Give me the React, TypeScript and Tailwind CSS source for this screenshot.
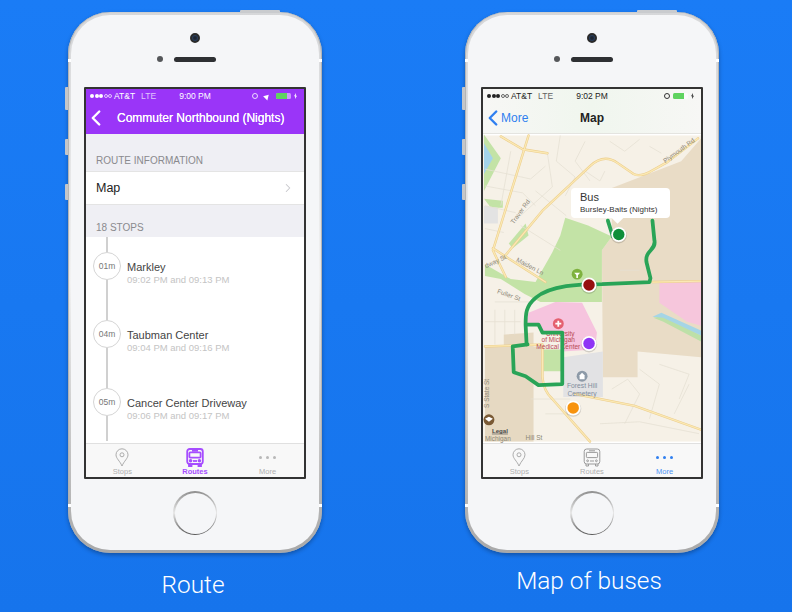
import React from 'react';
import { ChevronLeft, ChevronRight } from 'lucide-react';

const stops = [
  { mins: '01m', name: 'Markley', times: '09:02 PM and 09:13 PM' },
  { mins: '04m', name: 'Taubman Center', times: '09:04 PM and 09:16 PM' },
  { mins: '05m', name: 'Cancer Center Driveway', times: '09:06 PM and 09:17 PM' },
];

const streets = [
  'M547 152 L552 186 L520 215',
  'M560 134 L556 160 L575 176 L565 195',
  'M585 140 L575 160 L590 180',
  'M484 168 L530 178 L545 165',
  'M484 185 L522 192 L535 205',
  'M484 205 L515 212',
  'M484 228 L503 232',
  'M510 150 L500 205',
  'M520 225 L560 250',
  'M535 190 L566 215',
  'M494 302 L530 302',
  'M484 322 L520 322',
  'M494 310 L494 345',
  'M504 310 L504 335',
  'M514 310 L514 335',
  'M612 390 L628 380 L640 395 L625 425',
  'M640 370 L660 385 L650 420',
  'M660 365 L690 375 L680 400',
  'M690 385 L675 415',
  'M600 425 L640 423 L700 435',
  'M530 400 L570 400',
  'M545 415 L575 415',
  'M610 140 L625 150 L640 138',
  'M650 145 L662 152',
  'M585 170 L600 180 L605 170',
  'M620 270 L640 270',
];

const roads = [
  'M503 257 L542 210 L590 165 Q604 152 618 162 L634 173 Q640 176 650 171 L668 161 L699 137',
  'M528 134 L492 250 L505 277',
  'M500 135 L522 148 L547 152',
  'M492 248 L545 282',
  'M484 347 L542 345 L542 378 Q543 392 552 400 L590 443',
  'M575 395 L635 407 L702 431',
  'M653 282 L702 281',
];

const BusMap = () => {
  return (
    <svg viewBox="482 134 220 309" className="block w-full h-full">
      <rect x="482" y="134" width="220" height="309" fill="#f6f1e7" />
      <path d="M612 187 L682 160 L702 137 L702 358 L638 352 L638 378 L603 378 L602 250 L612 236 Z" fill="#e9dcc6" />
      <path d="M503 335 L533 333 L533 347 L542 347 L542 385 L533 385 L533 443 L484 443 L484 347 L503 347 Z" fill="#e6d9c2" />
      <path d="M660 283 L702 280 L702 326 L688 322 L660 303 Z" fill="#f6c6dc" />
      <path d="M654 318 L664 316 L702 336 L702 342 L664 322 Z" fill="#bde0a8" />
      <path d="M653 317 L662 313 L702 331 L702 336 L664 318 Z" fill="#a5d5e6" />
      <path d="M565 217 L588 225 L612 236 L602 250 L602 302 L540 302 L524 294 L500 279 L484 276 L484 264 L510 279 L535 282 L552 252 L560 235 Z" fill="#c3e3a6" />
      <path d="M483 133 L500 157 L483 190 Z" fill="#c3e3a6" />
      <path d="M483 142 L492 157 L483 173 Z" fill="#a3d3ea" />
      <path d="M483 198 L502 200 L502 207 L490 207 Z" fill="#c3e3a6" />
      <path d="M508 243 L525 223 L528 235 L512 248 Z" fill="#c3e3a6" />
      <path d="M483 205 L497 207 L497 223 L483 223 Z" fill="#e3e3e3" />
      <path d="M528 313 L555 302 L582 303 L597 333 L595 350 L562 352 L562 333 L541 332 L538 325 L525 325 Z" fill="#f6c4de" />
      <path d="M543 350 L562 350 L562 372 L543 372 Z" fill="#c3e3a6" />
      <path d="M563 358 L603 352 L603 398 L563 398 Z" fill="#e2e2e4" />
      <g fill="none" stroke="#e6e0d4" strokeWidth="0.8">
        {streets.map((d) => (
          <path key={d} d={d} />
        ))}
      </g>
      <g fill="none" strokeLinejoin="round" strokeLinecap="round">
        <g stroke="#eccd8c" strokeWidth="2.4">
          {roads.map((d) => (
            <path key={d} d={d} />
          ))}
        </g>
        <g stroke="#fbe9b4" strokeWidth="1.3">
          {roads.map((d) => (
            <path key={d} d={d} />
          ))}
        </g>
      </g>
      <g fill="#8d8776" fontSize="6.5">
        <text x="0" y="0" transform="translate(666 162) rotate(-36)">Plymouth Rd</text>
        <text x="0" y="0" transform="translate(513 224) rotate(-54)">Traver Rd</text>
        <text x="0" y="0" transform="translate(515 261) rotate(28)">Maiden Ln</text>
        <text x="0" y="0" transform="translate(496 293) rotate(20)">Fuller St</text>
        <text x="0" y="0" transform="translate(485 268) rotate(-25)">dway St</text>
        <text x="0" y="0" transform="translate(488 409) rotate(-90)">S State St</text>
        <text x="525" y="441">Hill St</text>
        <text x="484" y="442">Michigan</text>
      </g>
      <g textAnchor="middle" fill="#b84a55" fontSize="6.6">
        <text x="560" y="336">University</text>
        <text x="558" y="343">of Michigan</text>
        <text x="558" y="350">Medical Center</text>
      </g>
      <g textAnchor="middle" fill="#7f8d9c" fontSize="6.8">
        <text x="582" y="389">Forest Hill</text>
        <text x="582" y="397">Cemetery</text>
      </g>
      <text x="491" y="434" fill="#4a4a4a" fontSize="6.2" fontWeight="700" textDecoration="underline">
        Legal
      </text>
      <g fill="none" stroke="#29a457" strokeWidth="3.8" strokeLinejoin="round" strokeLinecap="round">
        <path d="M608 220 L613 236" />
        <path d="M653 220 L655 240 C657 250 645 250 647 262 L651 278 L650 282 L602 284 C580 284 550 285 535 298 C525 306 525 315 525 325 L526 345" />
        <path d="M527 325 L538 325 L542 333 L562 333 L562 385 L538 386 L525 377 L513 373 L512 347 L527 345" />
      </g>
      <circle cx="558" cy="324" r="5.5" fill="#e4606f" />
      <path d="M558 321 V327 M555 324 H561" stroke="#ffffff" strokeWidth="1.8" />
      <circle cx="577" cy="274" r="5.5" fill="#7fb23e" />
      <path d="M574 272.5 H580 L578 275 H577.8 V278 H576.2 V275 Z" fill="#ffffff" />
      <circle cx="582" cy="377" r="5.5" fill="#8d9aa8" />
      <path d="M579.5 380 V376 L582 373.5 L584.5 376 V380 Z" fill="#ffffff" />
      <circle cx="488" cy="421" r="5.5" fill="#7a5a35" />
      <path d="M484 420 L488 418 L492 420 L488 423 Z" fill="#ffffff" />
      {[
        { x: 619, y: 234, c: '#0f8f3a' },
        { x: 589, y: 285, c: '#960f0f' },
        { x: 589, y: 344, c: '#8f34f5' },
        { x: 573, y: 409, c: '#f7930f' },
      ].map((m) => (
        <g key={m.c}>
          <circle cx={m.x} cy={m.y + 0.8} r="8.2" fill="#000000" opacity="0.15" />
          <circle cx={m.x} cy={m.y} r="7.6" fill="#ffffff" />
          <circle cx={m.x} cy={m.y} r="5.8" fill={m.c} />
        </g>
      ))}
    </svg>
  );
};

const PinIcon = ({ color }: { color: string }) => (
  <svg width="14" height="19" viewBox="0 0 14 19" fill="none" stroke={color} strokeWidth="0.9">
    <path d="M7 18 C5 13 1 10.5 1 6.8 A6 6 0 0 1 13 6.8 C13 10.5 9 13 7 18 Z" />
    <circle cx="7" cy="6.8" r="2" />
  </svg>
);

const BusIcon = ({ color, active }: { color: string; active?: boolean }) => (
  <svg width="18" height="19" viewBox="0 0 18 19" fill="none" stroke={color} strokeWidth={active ? 1.8 : 1}>
    <rect x="1.2" y="1" width="15.6" height="15" rx="2.5" />
    <rect x="3.4" y="4.4" width="11.2" height="5.2" rx="0.8" />
    <path d="M6 2.8 H12" />
    <path d="M3 16 V18 H5.5 V16 M12.5 16 V18 H15 V16" />
    <circle cx="4.6" cy="12.8" r="0.9" />
    <circle cx="13.4" cy="12.8" r="0.9" />
    <path d="M7 13 H11" />
  </svg>
);

const TabBar = ({ active }: { active: 'routes' | 'more' }) => {
  const routeColor = active === 'routes' ? '#a64dff' : '#9a9a9a';
  const moreColor = active === 'more' ? 'bg-[#2f7ff0]' : 'bg-[#b8b8b8]';
  return (
    <div className="grid grid-cols-3 h-[34px] bg-[#f8f8f8] border-t border-[#e0e0e0] text-center text-[7.5px] leading-[9px]">
      <div className="flex flex-col items-center pt-[4px]">
        <div className="h-[19px]">
          <PinIcon color="#a3a3a3" />
        </div>
        <span className="text-[#b0b0b0]">Stops</span>
      </div>
      <div className="flex flex-col items-center pt-[4px]">
        <div className="h-[19px]">
          <BusIcon color={routeColor} active={active === 'routes'} />
        </div>
        <span className={active === 'routes' ? 'text-[#a64dff] font-bold' : 'text-[#b0b0b0]'}>Routes</span>
      </div>
      <div className="flex flex-col items-center pt-[4px]">
        <div className="h-[19px] flex items-center gap-[4px] pb-[1px]">
          <span className={`w-[3px] h-[3px] rounded-full ${moreColor}`} />
          <span className={`w-[3px] h-[3px] rounded-full ${moreColor}`} />
          <span className={`w-[3px] h-[3px] rounded-full ${moreColor}`} />
        </div>
        <span className={active === 'more' ? 'text-[#4d93f5]' : 'text-[#b0b0b0]'}>More</span>
      </div>
    </div>
  );
};

const StatusBar = ({ time, light, arrow }: { time: string; light?: boolean; arrow?: boolean }) => {
  const dot = light ? 'bg-white' : 'bg-[#222222]';
  const ring = light ? 'border-white/70' : 'border-[#666666]';
  return (
    <div className={`relative flex items-center h-[14px] pl-[4px] pr-[7px] text-[8.5px] ${light ? 'text-white' : 'text-[#222222]'}`}>
      <div className="flex items-center gap-[0.5px]">
        <span className={`w-[4px] h-[4px] rounded-full ${dot}`} />
        <span className={`w-[4px] h-[4px] rounded-full ${dot}`} />
        <span className={`w-[4px] h-[4px] rounded-full ${dot}`} />
        <span className={`w-[4px] h-[4px] rounded-full border-[0.5px] ${ring}`} />
        <span className={`w-[4px] h-[4px] rounded-full border-[0.5px] ${ring}`} />
      </div>
      <span className="ml-[2px]">AT&amp;T</span>
      <span className="ml-[6px] opacity-70">LTE</span>
      <span className="absolute left-0 right-0 text-center">{time}</span>
      <div className="ml-auto flex items-center gap-[3px]">
        <span className={`w-[6px] h-[6px] rounded-full border ${light ? 'border-white/80' : 'border-[#333333]'}`} />
        {arrow && <span className="w-0 h-0 ml-[3px] mr-[3px] border-l-[3px] border-r-[3px] border-b-[5px] border-l-transparent border-r-transparent border-b-white rotate-45" />}
        <div className="w-[15px] h-[6px] rounded-[1.5px] bg-white/50">
          <div className="w-[11px] h-[6px] rounded-l-[1.5px] bg-[#5fd35f]" />
        </div>
        <svg width="3" height="6" viewBox="0 0 3 6" className={light ? 'fill-white' : 'fill-[#333333]'}>
          <path d="M2 0 L0 3.3 H1.2 L1 6 L3 2.7 H1.8 Z" />
        </svg>
      </div>
    </div>
  );
};

const RouteScreen = () => {
  return (
    <div className="flex flex-col h-full">
      <div className="h-[45px] bg-[#9a35f8] text-white">
        <StatusBar time="9:00 PM" light arrow />
        <div className="flex items-center h-[30px]">
          <ChevronLeft size={26} strokeWidth={2.2} className="-ml-[3px]" />
          <span className="ml-[8px] text-[12px] whitespace-nowrap [text-shadow:0_0_0.4px_#ffffff]">Commuter Northbound (Nights)</span>
        </div>
      </div>
      <div className="h-[37px] bg-[#efeff4] flex items-end pl-[10px] pb-[4px] text-[10px] leading-[12px] text-[#8a8a8e]">
        ROUTE INFORMATION
      </div>
      <div className="h-[34px] bg-white border-y border-[#e4e4e4] flex items-center justify-between pl-[10px] pr-[9px] text-[12.5px] text-[#222222]">
        Map
        <ChevronRight size={14} strokeWidth={1.8} className="text-[#c7c7cc]" />
      </div>
      <div className="h-[32px] bg-[#efeff4] flex items-end pl-[10px] pb-[3px] text-[10px] leading-[12px] text-[#8a8a8e]">
        18 STOPS
      </div>
      <div className="flex-1 min-h-0 overflow-hidden bg-white">
        {stops.map((stop) => (
          <div key={stop.mins} className="flex h-[68px] pl-[7px]">
            <div className="flex flex-col items-center w-[28px]">
              <div className="w-[1.5px] h-[15px] bg-[#d0d0d0]" />
              <div className="w-[28px] h-[28px] shrink-0 rounded-full border-[1.5px] border-[#d5d5d5] flex items-center justify-center text-[8.5px] text-[#777777]">
                {stop.mins}
              </div>
              <div className="w-[1.5px] h-[25px] bg-[#d0d0d0]" />
            </div>
            <div className="ml-[6px] pt-[24px]">
              <div className="text-[11px] leading-[13px] text-[#444444]">{stop.name}</div>
              <div className="text-[9.5px] leading-[12px] text-[#c4c4c4]">{stop.times}</div>
            </div>
          </div>
        ))}
      </div>
      <TabBar active="routes" />
    </div>
  );
};

const MapScreen = () => {
  return (
    <div className="flex flex-col h-full">
      <div className="h-[45px] bg-linear-to-r from-[#f7f7f5] via-[#f0f6ee] to-[#f7f7f5] border-b border-[#e4e4e0]">
        <StatusBar time="9:02 PM" />
        <div className="relative flex items-center h-[30px] text-[#2f7ff0]">
          <ChevronLeft size={26} strokeWidth={2.2} className="-ml-[3px]" />
          <span className="-ml-[5px] text-[12px]">More</span>
          <span className="absolute left-0 right-0 text-center text-[12px] font-bold text-[#222222]">Map</span>
        </div>
      </div>
      <div className="relative flex-1 min-h-0 overflow-hidden">
        <BusMap />
        <div className="absolute left-[88px] top-[54px] w-[99px] h-[30px] rounded-[4px] bg-white pl-[9px] pt-[3px] text-[#333333]">
          <div className="text-[11px] leading-[13px]">Bus</div>
          <div className="text-[8px] leading-[11px] whitespace-nowrap">Bursley-Baits (Nights)</div>
          <div className="absolute left-[42px] top-[25px] w-[9px] h-[9px] rotate-45 bg-white" />
        </div>
      </div>
      <TabBar active="more" />
    </div>
  );
};

const Phone = ({ children }: { children: React.ReactNode }) => {
  return (
    <div className="relative w-[254px] h-[541px] rounded-[42px] bg-linear-to-b from-[#d6d7d9] via-[#f2f2f2] to-[#a8a8a8] p-[3px] shadow-[0_2px_4px_rgba(0,0,0,0.3),inset_1px_0_1px_#b0b0b0,inset_-1px_0_1px_#b0b0b0]">
      <div className="absolute -left-[3px] top-[75px] w-[3px] h-[23px] rounded-l-[1px] bg-[#c4c6c9]" />
      <div className="absolute -left-[3px] top-[127px] w-[3px] h-[16px] rounded-l-[1px] bg-[#c4c6c9]" />
      <div className="absolute -left-[3px] top-[172px] w-[3px] h-[16px] rounded-l-[1px] bg-[#c4c6c9]" />
      <div className="absolute right-[42px] -top-[2px] w-[40px] h-[3px] rounded-t-[1px] bg-[#c9cbce]" />
      <div className="absolute left-0 top-[47px] w-[3px] h-[3px] bg-white" />
      <div className="absolute right-0 top-[47px] w-[3px] h-[3px] bg-white" />
      <div className="absolute left-0 top-[492px] w-[3px] h-[3px] bg-white" />
      <div className="absolute right-0 top-[492px] w-[3px] h-[3px] bg-white" />
      <div className="h-full rounded-[39px] bg-[#f5f6f8] flex flex-col items-center pt-[18px]">
        <div className="w-[10px] h-[10px] rounded-full bg-[#1d2430] border-[2px] border-[#2a2a2a] shadow-[inset_0_0_2px_#3f6fb0]" />
        <div className="flex items-center gap-[11px] mt-[13px] pr-[17px]">
          <div className="w-[6px] h-[6px] rounded-full bg-[#55575a]" />
          <div className="w-[42px] h-[5px] rounded-full bg-[#2e3033]" />
        </div>
        <div className="mt-[25px] w-[222px] h-[392px] border-[2px] border-[#333333] rounded-[1px] overflow-hidden bg-white">
          {children}
        </div>
        <div className="mt-[12px] w-[44px] h-[44px] rounded-full bg-linear-to-b from-[#8f8f8f] via-[#e8e8e8] to-[#555555] p-[1.5px]">
          <div className="w-full h-full rounded-full bg-[#f5f6f8]" />
        </div>
      </div>
    </div>
  );
};

export default function App() {
  return (
    <div className="w-[792px] h-[612px] overflow-hidden bg-linear-to-b from-[#1a7cf6] to-[#1674ec] font-['Liberation_Sans',sans-serif] flex pl-[68px] pt-[12px] gap-[143px]">
      <div className="flex flex-col items-center">
        <Phone>
          <RouteScreen />
        </Phone>
        <div className="mt-[16px] pr-[4px] text-[24.4px] leading-[32px] font-['Roboto',sans-serif] font-light text-white">Route</div>
      </div>
      <div className="flex flex-col items-center">
        <Phone>
          <MapScreen />
        </Phone>
        <div className="mt-[12px] pr-[6px] text-[24.4px] leading-[32px] font-['Roboto',sans-serif] font-light text-white">Map of buses</div>
      </div>
    </div>
  );
}
